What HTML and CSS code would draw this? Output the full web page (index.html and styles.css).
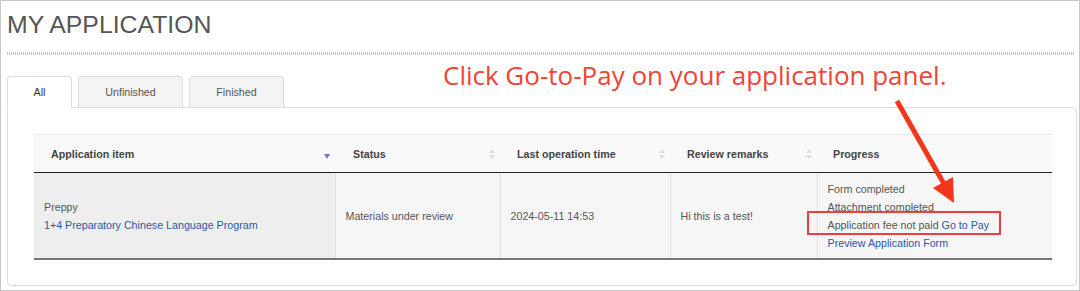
FILE: index.html
```html
<!DOCTYPE html>
<html lang="en">
<head>
  <meta charset="UTF-8">
  <meta name="viewport" content="width=device-width, initial-scale=1.0">
  <title>My Application</title>
  <link rel="stylesheet" href="styles.css">
</head>
<body>
  <div class="page">
    <h1 class="title">MY APPLICATION</h1>
    <div class="rule"></div>

    <ul class="tabs">
      <li class="tab tab-all active">All</li>
      <li class="tab tab-unfinished">Unfinished</li>
      <li class="tab tab-finished">Finished</li>
    </ul>

    <div class="panel">
      <table class="apps">
        <colgroup>
          <col class="c-item">
          <col class="c-status">
          <col class="c-time">
          <col class="c-remarks">
          <col class="c-progress">
        </colgroup>
        <thead>
          <tr>
            <th><div class="th">Application item <i class="sort sort-desc"></i></div></th>
            <th><div class="th">Status <i class="sort"></i></div></th>
            <th><div class="th">Last operation time <i class="sort"></i></div></th>
            <th><div class="th">Review remarks <i class="sort"></i></div></th>
            <th><div class="th">Progress</div></th>
          </tr>
        </thead>
        <tbody>
          <tr>
            <td class="sorted">
              Preppy<br>
              <a href="#">1+4 Preparatory Chinese Language Program</a>
            </td>
            <td>Materials under review</td>
            <td>2024-05-11 14:53</td>
            <td>Hi this is a test!</td>
            <td>
              Form completed<br>
              Attachment completed<br>
              Application fee not paid <a href="#">Go to Pay</a><br>
              <a href="#">Preview Application Form</a>
            </td>
          </tr>
        </tbody>
      </table>
    </div>
  </div>

  <!-- annotation drawn over the screenshot -->
  <p class="callout">Click Go-to-Pay on your application panel.</p>
  <svg class="marks" width="1080" height="291" viewBox="0 0 1080 291">
    <line x1="897" y1="101" x2="944" y2="184" stroke="#f4361c" stroke-width="5"/>
    <polygon points="954,203 933,188 953,177" fill="#f4361c"/>
    <rect x="808" y="212" width="192" height="22" fill="none" stroke="#e8403f" stroke-width="2"/>
  </svg>
</body>
</html>
```

FILE: styles.css
```css
body {
  margin: 0;
  padding: 0;
  position: relative;
  font-family: "Liberation Sans", Arial, sans-serif;
  background: #fff;
}
.page {
  width: 1080px;
  height: 291px;
  box-sizing: border-box;
  border: 1px solid #c6c6c6;
  padding: 10px 2px 0 6px;
}
.title {
  margin: 0;
  font-size: 24.8px;
  line-height: 28px;
  font-weight: normal;
  color: #555;
}
.rule {
  margin-top: 13px;
  height: 3px;
  margin-right: 2px;
  background: repeating-linear-gradient(90deg, #c4c4c4 0 1px, transparent 1px 2px);
}

/* tabs */
.tabs {
  list-style: none;
  display: flex;
  align-items: flex-start;
  gap: 6px;
  margin: 21px 0 -1px 0;
  padding: 0;
  font-size: 10.7px;
  color: #555;
}
.tab {
  height: 31px;
  box-sizing: border-box;
  display: flex;
  align-items: center;
  justify-content: center;
  border: 1px solid #ddd;
  border-bottom: none;
  border-radius: 4px 4px 0 0;
  background: #f4f4f4;
}
.tab.active {
  height: 32px;
  background: #fff;
  border-bottom: 1px solid #fff;
  color: #333;
  position: relative;
  z-index: 1;
}
.tab-all { width: 65px; }
.tab-unfinished { width: 105px; }
.tab-finished { width: 95px; }

.panel {
  border: 1px solid #ddd;
  border-radius: 0 4px 4px 4px;
  padding: 26px 24px 25px 26px;
}

/* table */
.apps {
  width: 100%;
  table-layout: fixed;
  border-collapse: collapse;
  font-size: 10.7px;
  color: #555;
}
.c-item { width: 301px; }
.c-status { width: 165px; }
.c-time { width: 170px; }
.c-remarks { width: 147px; }
.c-progress { width: 235px; }

.apps th {
  height: 37px;
  padding: 0 5px 0 17px;
  background: #f9f9f9;
  border-top: 1px solid #e8e8e8;
  border-bottom: 1px solid #222;
  text-align: left;
  font-weight: bold;
  color: #444;
}
.apps th:nth-child(2) { padding-left: 18px; }
.apps th:nth-child(5) { padding-left: 16px; }
.th {
  display: flex;
  align-items: center;
  justify-content: space-between;
}
.sort {
  width: 6px;
  height: 10px;
  position: relative;
}
.sort::before, .sort::after {
  content: "";
  position: absolute;
  left: 0;
  border-left: 3px solid transparent;
  border-right: 3px solid transparent;
}
.sort::before {
  top: 0;
  border-bottom: 4px solid #dcdcdc;
}
.sort::after {
  bottom: 0;
  border-top: 4px solid #dcdcdc;
}
.sort-desc::before { display: none; }
.sort-desc::after {
  bottom: 0;
  border-left-width: 3.5px;
  border-right-width: 3.5px;
  border-top: 5px solid #6f77c6;
}

.apps td {
  height: 85px;
  padding: 0 10px;
  line-height: 18px;
  vertical-align: middle;
  background: #f6f6f6;
  border-left: 1px solid #e0e0e0;
  border-bottom: 2px solid #777;
}
.apps td:first-child { border-left: none; }
.apps td.sorted { background: #eeeeee; }
.apps a {
  color: #2b58a6;
  text-decoration: none;
}

/* annotation */
.callout {
  position: absolute;
  left: 443px;
  top: 58px;
  margin: 0;
  font-family: "Open Sans", "Noto Sans", sans-serif;
  font-size: 26px;
  line-height: 34px;
  color: #f04436;
  white-space: nowrap;
}
.marks {
  position: absolute;
  left: 0;
  top: 0;
  pointer-events: none;
}
```
